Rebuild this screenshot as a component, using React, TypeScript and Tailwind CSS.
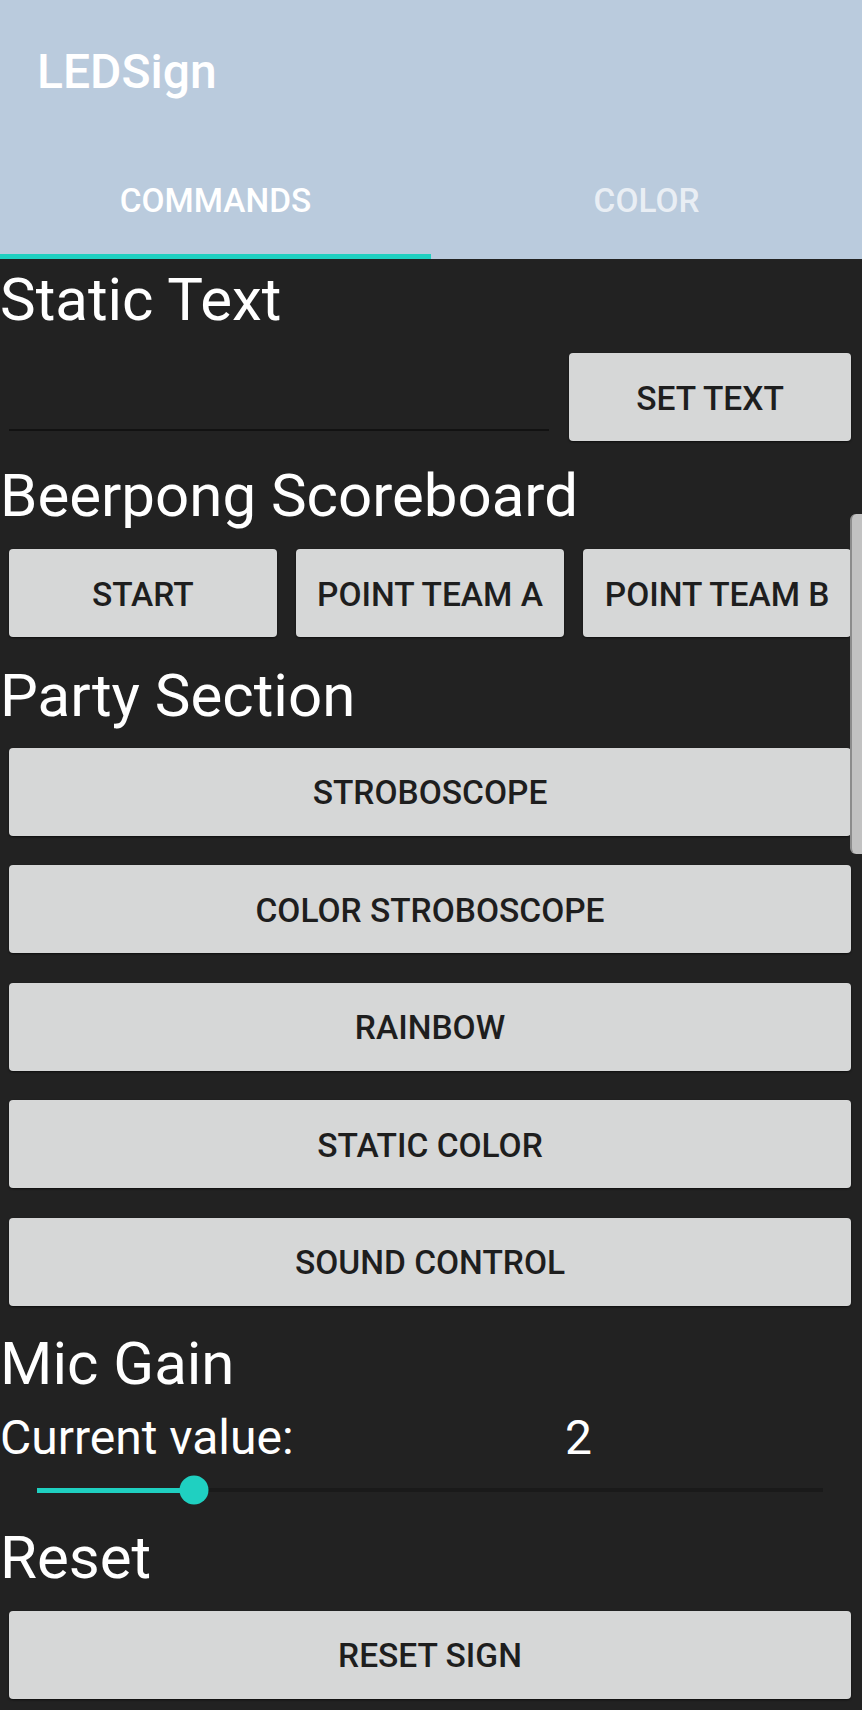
const headingClass =
  "text-white text-[60px] leading-[74px] pt-[4px] h-[78px] whitespace-nowrap";

function GrayButton({ label, className = "" }: { label: string; className?: string }) {
  return (
    <button
      type="button"
      className={`h-[88px] flex items-center justify-center pt-[4px] rounded-[4px] bg-[#d6d7d7] text-[#1e1e1e] text-[33.5px] font-medium shadow-[0_1px_2px_rgba(0,0,0,0.6)] whitespace-nowrap ${className}`}
    >
      {label}
    </button>
  );
}

export default function App() {
  const micGain = 2;
  const micMax = 10;

  return (
    <div className="relative w-full min-h-[1710px] bg-[#222222] font-[Roboto,'Liberation_Sans',sans-serif]">
      {/* app bar + tabs */}
      <div className="bg-[#bacbdd]">
        <div className="h-[144px] flex items-center pl-[37px]">
          <h1 className="text-white text-[48px] font-medium">LEDSign</h1>
        </div>
        <div className="flex h-[115px]">
          <div className="flex-1 flex flex-col">
            <div className="flex-1 flex items-center justify-center pt-[5px] text-white text-[33.4px] font-medium">
              COMMANDS
            </div>
            <div className="h-[5px] bg-[#1fd0c1]" />
          </div>
          <div className="flex-1 flex flex-col">
            <div className="flex-1 flex items-center justify-center pt-[5px] text-white/70 text-[33.4px] font-medium">
              COLOR
            </div>
            <div className="h-[5px]" />
          </div>
        </div>
      </div>

      {/* Static text */}
      <div className={headingClass}>Static Text</div>
      <div className="flex items-start gap-[20px] pl-[9px] pr-[11px] pt-[16px] pb-[14px]">
        <div className="flex-1 h-[88px] flex items-end pb-[10px]">
          <div className="w-full h-[2px] bg-[#121212]" />
        </div>
        <GrayButton label="SET TEXT" className="w-[282px]" />
      </div>

      {/* Beerpong */}
      <div className={headingClass}>Beerpong Scoreboard</div>
      <div className="grid grid-cols-3 gap-[19.5px] pl-[9px] pr-[11px] pt-[16px] pb-[18px]">
        <GrayButton label="START" />
        <GrayButton label="POINT TEAM A" />
        <GrayButton label="POINT TEAM B" />
      </div>

      {/* Party */}
      <div className={headingClass}>Party Section</div>
      <div className="flex flex-col gap-[29.5px] pl-[9px] pr-[11px] pt-[14.5px]">
        <GrayButton label="STROBOSCOPE" />
        <GrayButton label="COLOR STROBOSCOPE" />
        <GrayButton label="RAINBOW" />
        <GrayButton label="STATIC COLOR" />
        <GrayButton label="SOUND CONTROL" />
      </div>

      {/* Mic gain */}
      <div className={`${headingClass} mt-[17.5px]`}>Mic Gain</div>
      <div className="flex mt-[8px] text-white text-[48px] leading-[58px] whitespace-nowrap">
        <span className="w-[565px]">Current value:</span>
        <span>{micGain}</span>
      </div>
      <div className="h-[46px] flex items-center pl-[37px]">
        <div className="relative w-[786px] h-[5px] flex items-center">
          <div className="h-[5px] bg-[#1fd0c1]" style={{ width: `${(micGain / micMax) * 100}%` }} />
          <div className="flex-1 h-[4px] bg-[#1a1a1a]" />
          <div
            className="absolute top-1/2 w-[29px] h-[29px] -translate-x-1/2 -translate-y-1/2 rounded-full bg-[#1fd0c1]"
            style={{ left: `${(micGain / micMax) * 100}%` }}
          />
        </div>
      </div>

      {/* Reset */}
      <div className={`${headingClass} mt-[4px]`}>Reset</div>
      <div className="pl-[9px] pr-[11px] pt-[15.5px] pb-[11px]">
        <GrayButton label="RESET SIGN" className="w-full" />
      </div>

      {/* scroll indicator */}
      <div className="absolute right-0 top-[514px] w-[12px] h-[340px] rounded-l-[6px] bg-[#c2c2c2] border-l-2 border-[#8c8c8c]" />
    </div>
  );
}
